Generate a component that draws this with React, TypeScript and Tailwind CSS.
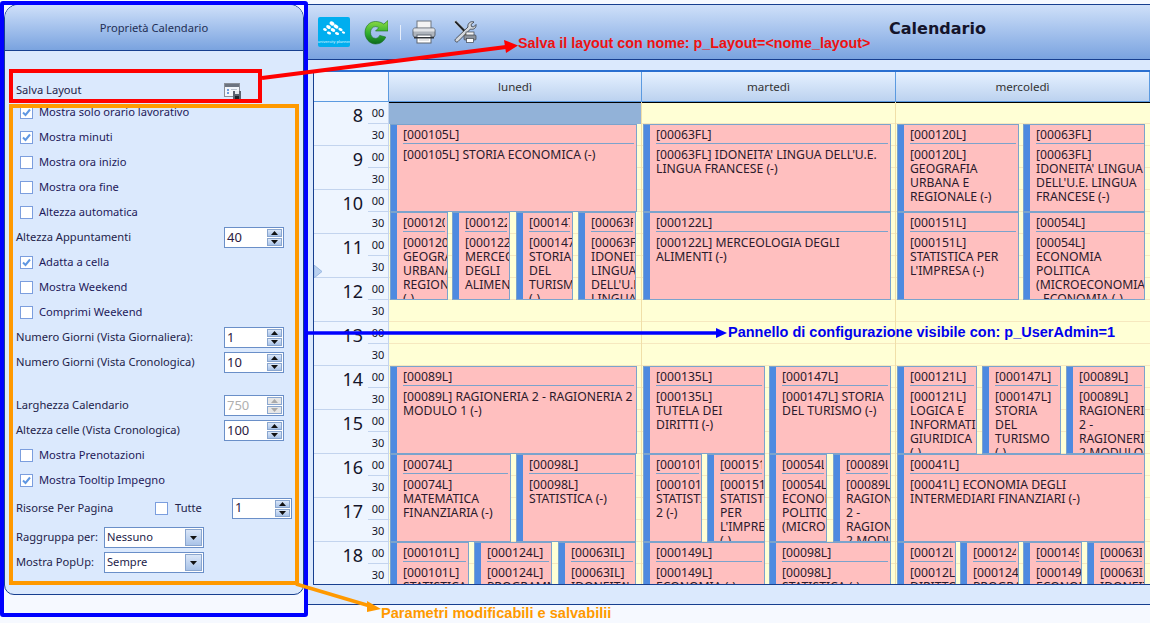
import React from "react";

type Ev = { code: string; text: string; cls: string };

const gridBg =
  "bg-[repeating-linear-gradient(to_bottom,#ffffd5_0px,#ffffd5_21px,#f6e8bf_21px,#f6e8bf_22px)]";

const E = ({ code, text, cls }: Ev) => (
  <div className={`flex h-[88px] shrink-0 overflow-hidden border border-[#7ba3cc] bg-[#ffbfbf] ${cls}`}>
    <div className="w-[6px] shrink-0 bg-[#4e8ae0]" />
    <div className="min-w-0 flex-1 pl-[6px] pr-[2px] text-[12.2px] leading-[14px] text-[#2b1a2b]">
      <div className="h-[19px] overflow-hidden whitespace-nowrap border-b border-[#7ba3cc] pt-[3px]">[{code}]</div>
      <div className="pt-[4px]">
        [{code}] {text.endsWith("(-)") ? text : `${text} (-)`}
      </div>
    </div>
  </div>
);

const Block = ({ items }: { items: Ev[] }) => (
  <div className="flex h-[88px] shrink-0">
    {items.map((e, i) => (
      <E key={i} {...e} />
    ))}
  </div>
);

const GEO = "GEOGRAFIA URBANA\u00A0E REGIONALE";
const MER = "MERCEOLOGIA DEGLI ALIMENTI\u00A0(-)";
const TUR = "STORIA DEL TURISMO";
const FRA = "IDONEITA' LINGUA DELL'U.E. LINGUA FRANCESE";
const RAG = "RAGIONERIA 2 - RAGIONERIA 2 MODULO 1";
const RAGN = "RAGIONERIA 2 - RAGIONERIA 2\u00A0MODULO 1";
const POL = "ECONOMIA POLITICA (MICROECONOMIA) -\u00A0ECONOMIA";
const IMP = "STATISTICA PER L'IMPRESA";

const Day1 = () => (
  <>
    <Block items={[{ code: "000105L", text: "STORIA ECONOMICA", cls: "ml-[1px] w-[247px]" }]} />
    <Block
      items={[
        { code: "000120L", text: GEO, cls: "ml-[1px] w-[58px]" },
        { code: "000122L", text: MER, cls: "ml-[4px] w-[58px]" },
        { code: "000147L", text: TUR, cls: "ml-[6px] w-[57px]" },
        { code: "00063FL", text: FRA, cls: "ml-[5px] w-[58px]" },
      ]}
    />
    <div className="h-[66px] shrink-0" />
    <Block items={[{ code: "00089L", text: RAG, cls: "ml-[1px] w-[247px]" }]} />
    <Block
      items={[
        { code: "00074L", text: "MATEMATICA FINANZIARIA", cls: "ml-[1px] w-[121px]" },
        { code: "00098L", text: "STATISTICA", cls: "ml-[5px] w-[120px]" },
      ]}
    />
    <Block
      items={[
        { code: "000101L", text: "STATISTICA 2", cls: "ml-[1px] w-[79px]" },
        { code: "000124L", text: "PROGRAMMAZIONE", cls: "ml-[5px] w-[78px]" },
        { code: "00063IL", text: "IDONEITA' LINGUA", cls: "ml-[6px] w-[78px]" },
      ]}
    />
  </>
);

const Day2 = () => (
  <>
    <Block items={[{ code: "00063FL", text: FRA, cls: "ml-[1px] w-[248px]" }]} />
    <Block items={[{ code: "000122L", text: MER, cls: "ml-[1px] w-[248px]" }]} />
    <div className="h-[66px] shrink-0" />
    <Block
      items={[
        { code: "000135L", text: "TUTELA\u00A0DEI DIRITTI", cls: "ml-[1px] w-[122px]" },
        { code: "000147L", text: TUR, cls: "ml-[4px] w-[122px]" },
      ]}
    />
    <Block
      items={[
        { code: "000101L", text: "STATISTICA 2", cls: "ml-[1px] w-[59px]" },
        { code: "000151L", text: IMP, cls: "ml-[5px] w-[58px]" },
        { code: "00054L", text: POL, cls: "ml-[4px] w-[58px]" },
        { code: "00089L", text: RAGN, cls: "ml-[6px] w-[58px]" },
      ]}
    />
    <Block
      items={[
        { code: "000149L", text: "ECONOMIA", cls: "ml-[1px] w-[122px]" },
        { code: "00098L", text: "STATISTICA", cls: "ml-[4px] w-[122px]" },
      ]}
    />
  </>
);

const Day3 = () => (
  <>
    <Block
      items={[
        { code: "000120L", text: GEO, cls: "ml-[1px] w-[122px]" },
        { code: "00063FL", text: FRA, cls: "ml-[4px] w-[122px] [&>div:last-child]:pr-0" },
      ]}
    />
    <Block
      items={[
        { code: "000151L", text: IMP, cls: "ml-[1px] w-[122px]" },
        { code: "00054L", text: POL, cls: "ml-[4px] w-[122px] [&>div:last-child]:pr-0" },
      ]}
    />
    <div className="h-[66px] shrink-0" />
    <Block
      items={[
        { code: "000121L", text: "LOGICA E INFORMATICA GIURIDICA", cls: "ml-[1px] w-[80px]" },
        { code: "000147L", text: TUR, cls: "ml-[5px] w-[79px]" },
        { code: "00089L", text: RAGN, cls: "ml-[5px] w-[79px]" },
      ]}
    />
    <Block items={[{ code: "00041L", text: "ECONOMIA DEGLI INTERMEDIARI FINANZIARI", cls: "ml-[1px] w-[248px]" }]} />
    <Block
      items={[
        { code: "00012L", text: "DIRITTO", cls: "ml-[1px] w-[59px]" },
        { code: "000124L", text: "PROGRAMMAZIONE", cls: "ml-[4px] w-[59px]" },
        { code: "000149L", text: "ECONOMIA", cls: "ml-[4px] w-[59px]" },
        { code: "00063IL", text: "IDONEITA' LINGUA", cls: "ml-[5px] w-[58px]" },
      ]}
    />
  </>
);

const Check = ({ on, label }: { on?: boolean; label: string }) => (
  <div className="flex h-[25px] shrink-0 items-center pl-[15px]">
    <span className="flex h-[13px] w-[13px] items-center justify-center border border-[#7b9ede] bg-white">
      {on && (
        <svg width="9" height="9" viewBox="0 0 9 9">
          <path d="M1 4.5 L3.5 7 L8 1.5" fill="none" stroke="#5f97e2" strokeWidth="2" />
        </svg>
      )}
    </span>
    <span className="ml-[6px] text-[11.15px] text-[#1e1a5a]">{label}</span>
  </div>
);

const Spin = ({ value, disabled }: { value: string; disabled?: boolean }) => (
  <div
    className={`flex h-[21px] w-[60px] shrink-0 items-center justify-between border border-[#6a8fc8] bg-white pl-[2px] pr-[1px] text-[13px] ${
      disabled ? "text-[#b0b0b0]" : "text-[#2b1a40]"
    }`}
  >
    <span>{value}</span>
    <span className="flex flex-col gap-[1px]">
      {[0, 1].map((i) => (
        <span
          key={i}
          className={`flex h-[8px] w-[15px] items-center justify-center border border-[#8aa6cf] ${
            disabled ? "bg-[#e6e6e6]" : "bg-gradient-to-b from-[#dbe7f8] to-[#a9c3e8]"
          }`}
        >
          <svg width="7" height="4" viewBox="0 0 7 4">
            <path d={i === 0 ? "M3.5 0 L7 4 L0 4 Z" : "M0 0 L7 0 L3.5 4 Z"} fill={disabled ? "#aaa" : "#111"} />
          </svg>
        </span>
      ))}
    </span>
  </div>
);

const NumRow = ({ label, value, disabled }: { label: string; value: string; disabled?: boolean }) => (
  <div className="flex h-[25px] shrink-0 items-center pl-[11px]">
    <span className="w-[208px] text-[11.15px] text-[#23234a]">{label}</span>
    <Spin value={value} disabled={disabled} />
  </div>
);

const Sel = ({ label, value, cls }: { label: string; value: string; cls: string }) => (
  <div className={`flex h-[21px] shrink-0 items-center pl-[11px] ${cls}`}>
    <span className="w-[88px] whitespace-nowrap text-[11.15px] text-[#23234a]">{label}</span>
    <div className="flex h-[21px] w-[100px] items-center justify-between border border-[#6a8fc8] bg-white pl-[2px] pr-[1px] text-[11.15px] text-[#23234a]">
      <span>{value}</span>
      <span className="flex h-[17px] w-[17px] items-center justify-center border border-[#8aa6cf] bg-gradient-to-b from-[#dbe7f8] to-[#a9c3e8]">
        <svg width="7" height="4" viewBox="0 0 7 4">
          <path d="M0 0 L7 0 L3.5 4 Z" fill="#111" />
        </svg>
      </span>
    </div>
  </div>
);

const SaveIcon = () => (
  <svg width="17" height="16" viewBox="0 0 17 16">
    <rect x="0.5" y="0.5" width="15" height="13" fill="#f3f6fb" stroke="#8a8f98" />
    <rect x="1" y="1" width="14" height="3" fill="#6d7480" />
    <rect x="3" y="6" width="2" height="2" fill="#6f9bd8" />
    <rect x="3" y="9" width="2" height="2" fill="#6f9bd8" />
    <rect x="7" y="6" width="6" height="1" fill="#b9c2cf" />
    <rect x="9" y="8" width="8" height="8" fill="#5b6270" />
    <rect x="11" y="8" width="4" height="3" fill="#e5e8ee" />
    <rect x="11" y="13" width="4" height="3" fill="#1f2329" />
  </svg>
);

const Logo = () => (
  <svg width="32" height="30" viewBox="0 0 32 30">
    <rect width="32" height="30" rx="2" fill="#00aeef" />
    <g fill="#fff">
      <ellipse cx="14" cy="6.5" rx="2.6" ry="2" transform="rotate(30 14 6.5)" />
      <ellipse cx="18" cy="9.5" rx="2.6" ry="1.8" transform="rotate(30 18 9.5)" />
      <ellipse cx="10.5" cy="10" rx="2.5" ry="1.7" transform="rotate(30 10.5 10)" />
      <ellipse cx="22.5" cy="12.5" rx="2.2" ry="1.5" transform="rotate(25 22.5 12.5)" />
      <ellipse cx="15" cy="13" rx="2.4" ry="1.7" transform="rotate(25 15 13)" />
      <ellipse cx="7" cy="12.5" rx="2" ry="1.4" transform="rotate(25 7 12.5)" />
      <ellipse cx="11" cy="16" rx="2.1" ry="1.4" transform="rotate(20 11 16)" />
      <ellipse cx="19" cy="16.5" rx="2.1" ry="1.4" transform="rotate(20 19 16.5)" />
      <ellipse cx="25.5" cy="15.5" rx="1.7" ry="1.1" transform="rotate(20 25.5 15.5)" />
    </g>
    <text x="16" y="26" textAnchor="middle" fontSize="4.2" fill="#d9f3ff" fontFamily="Liberation Sans, sans-serif">
      university planner
    </text>
  </svg>
);

const Refresh = () => (
  <svg width="24" height="26" viewBox="0 0 24 26">
    <defs>
      <linearGradient id="gr" x1="0" y1="0" x2="0" y2="1">
        <stop offset="0" stopColor="#8fdc45" />
        <stop offset="0.55" stopColor="#2fae2f" />
        <stop offset="1" stopColor="#0c6a1c" />
      </linearGradient>
    </defs>
    <path
      d="M11.5 2.5C5.5 2.5 1 7.4 1 13.5S5.5 25 11.5 25c4.8 0 8.8-2.8 10.2-7l-6-1.6c-.8 1.8-2.3 3-4.2 3-2.9 0-5-2.6-5-5.9s2.1-5.9 5-5.9c1.3 0 2.3.4 3.2 1.2L11.5 12H24V1.5l-4.2 3.6C17.6 3.4 14.7 2.5 11.5 2.5Z"
      fill="url(#gr)"
      stroke="#176b22"
      strokeWidth="0.6"
    />
  </svg>
);

const Printer = () => (
  <svg width="24" height="24" viewBox="0 0 24 24">
    <rect x="5" y="1" width="14" height="8" fill="#f4f4f4" stroke="#6f7680" />
    <rect x="1" y="8" width="22" height="9" rx="2" fill="#aeb4bc" stroke="#5f6670" />
    <rect x="1.5" y="8.5" width="21" height="3" fill="#dfe2e6" />
    <rect x="5" y="15" width="14" height="8" fill="#fff" stroke="#5f6670" />
    <rect x="2" y="17" width="20" height="1.5" fill="#2f3338" />
    <rect x="7" y="19.5" width="10" height="1" fill="#c5c8cc" />
  </svg>
);

const Tools = () => (
  <svg width="24" height="24" viewBox="0 0 24 24">
    <path d="M1 2 L3 0.5 L13.5 11 L11.5 13 Z" fill="#1f2328" stroke="#eef1f4" strokeWidth="0.6" />
    <path d="M11 11 L14 14 L12 15.5 L9.5 12.5 Z" fill="#e0b020" />
    <path d="M21 2 L18 4.5 L18.5 6.5 L20.5 7 L23 4.5 C23.5 8 20.5 10 17.5 9 L5 21.5 C3.5 23 1 21 2.5 19 L15 7 C14 4 17.5 0.5 21 2Z" fill="#d4d8dd" stroke="#30343a" strokeWidth="0.8" />
    <rect x="13" y="12" width="8" height="4" fill="#f4f4f4" stroke="#3f454d" strokeWidth="0.7" />
    <rect x="11" y="15" width="12" height="5" rx="1" fill="#8c939c" stroke="#3f454d" strokeWidth="0.7" />
    <rect x="13.5" y="18.5" width="7" height="4" fill="#fff" stroke="#3f454d" strokeWidth="0.7" />
  </svg>
);

const hours = [8, 9, 10, 11, 12, 13, 14, 15, 16, 17, 18];

export default function App() {
  return (
    <div className="relative flex h-[623px] w-[1150px] overflow-hidden bg-[#f6f9ff] font-['Noto_Sans',sans-serif]">
      {/* left panel */}
      <div className="ml-[4px] mt-[4px] flex h-[591px] w-[300px] shrink-0 flex-col rounded-b-[10px] rounded-t-[14px] border border-[#173f8f] bg-[#dbe9fd]">
        <div className="flex h-[46px] shrink-0 items-center justify-center rounded-t-[13px] border-b border-[#173f8f] bg-gradient-to-b from-[#cfe0f9] to-[#7aa3df] pt-[2px] text-[11.15px] text-[#1f2f55]">
          Proprietà Calendario
        </div>
        <div className="flex flex-col pt-[28px]">
          <div className="flex h-[21px] shrink-0 items-center pl-[11px] pt-[2px]">
            <span className="w-[208px] text-[11.15px] text-[#23234a]">Salva Layout</span>
            <SaveIcon />
          </div>
          <Check on label="Mostra solo orario lavorativo" />
          <Check on label="Mostra minuti" />
          <Check label="Mostra ora inizio" />
          <Check label="Mostra ora fine" />
          <Check label="Altezza automatica" />
          <NumRow label="Altezza Appuntamenti" value="40" />
          <Check on label="Adatta a cella" />
          <Check label="Mostra Weekend" />
          <Check label="Comprimi Weekend" />
          <NumRow label="Numero Giorni (Vista Giornaliera):" value="1" />
          <NumRow label="Numero Giorni (Vista Cronologica)" value="10" />
          <div className="h-[18px] shrink-0" />
          <NumRow label="Larghezza Calendario" value="750" disabled />
          <NumRow label="Altezza celle (Vista Cronologica)" value="100" />
          <Check label="Mostra Prenotazioni" />
          <Check on label="Mostra Tooltip Impegno" />
          <div className="flex h-[30px] shrink-0 items-center pl-[11px]">
            <span className="w-[139px] text-[11.15px] text-[#23234a]">Risorse Per Pagina</span>
            <span className="h-[13px] w-[13px] border border-[#7b9ede] bg-white" />
            <span className="ml-[7px] w-[57px] text-[11.15px] text-[#23234a]">Tutte</span>
            <Spin value="1" />
          </div>
          <Sel label="Raggruppa per:" value="Nessuno" cls="mt-[4px]" />
          <Sel label="Mostra PopUp:" value="Sempre" cls="mt-[4px]" />
        </div>
      </div>

      {/* right side */}
      <div className="ml-[4px] mt-[4px] flex h-[601px] min-w-0 flex-1 flex-col border-b border-[#173f8f]">
        <div className="flex h-[56px] shrink-0 items-center border-y border-[#173f8f] bg-gradient-to-b from-[#cfe0f9] to-[#7aa3df] pl-[10px]">
          <Logo />
          <span className="ml-[14px]">
            <Refresh />
          </span>
          <span className="ml-[12px] h-[15px] w-px bg-[#e6eefb]" />
          <span className="ml-[11px]">
            <Printer />
          </span>
          <span className="ml-[17px]">
            <Tools />
          </span>
          <span className="mb-[6px] ml-[412px] font-['DejaVu_Sans',sans-serif] text-[16px] font-bold text-[#14142a]">
            Calendario
          </span>
        </div>
        <div className="flex min-h-0 flex-1 flex-col bg-[#dbe9fd] pt-[10px]">
          <div className="ml-[5px] flex h-[515px] shrink-0 flex-col overflow-hidden border-b border-l border-t-2 border-[#173f8f] border-t-[#2a6fd0] bg-white">
            {/* header */}
            <div className="flex h-[30px] shrink-0 text-[11.6px] text-[#333]">
              <div className="w-[75px] shrink-0 border-b border-r border-[#5b9ae0] bg-[#eef5ff]" />
              {["lunedì", "martedì", "mercoledì"].map((d, i) => (
                <div
                  key={d}
                  className={`flex items-center justify-center border-b border-r border-[#5b9ae0] bg-gradient-to-b from-[#e6f1ff] to-[#bcd2ef] pt-[1px] ${
                    i === 0 ? "w-[253px]" : i === 1 ? "w-[254px]" : "flex-1"
                  }`}
                >
                  {d}
                </div>
              ))}
            </div>
            {/* body */}
            <div className="flex min-h-0 flex-1 overflow-hidden">
              <div className="relative w-[75px] shrink-0 border-r border-[#c3d4ee] bg-[#eef5ff]">
                {hours.map((h) => (
                  <div key={h} className="flex h-[44px] border-b border-[#c3d4ee]">
                    <div className="w-[50px] pt-[1px] pr-[1px] text-right text-[18px] leading-[24px] text-[#14142a]">{h}</div>
                    <div className="ml-[4px] flex w-[20px] flex-col text-[11px] text-[#14142a]">
                      <div className="flex h-[22px] items-center justify-center border-b border-[#c3d4ee] pt-[2px]">00</div>
                      <div className="flex h-[21px] items-center justify-center pt-[2px]">30</div>
                    </div>
                  </div>
                ))}
                <svg className="absolute left-[0px] top-[163px]" width="8" height="13" viewBox="0 0 8 13">
                  <path d="M0 0 L8 6.5 L0 13 Z" fill="#b9d0ef" stroke="#9ab8e2" />
                </svg>
              </div>
              <div className={`flex w-[253px] shrink-0 flex-col border-r border-[#f0dfa8] ${gridBg}`}>
                <div className="h-[22px] shrink-0 border-t border-black bg-[#92b2d8]" />
                <Day1 />
              </div>
              <div className={`flex w-[254px] shrink-0 flex-col border-r border-[#f0dfa8] ${gridBg}`}>
                <div className="h-[22px] shrink-0 border-t border-black" />
                <Day2 />
              </div>
              <div className={`flex min-w-0 flex-1 flex-col ${gridBg}`}>
                <div className="h-[22px] shrink-0 border-t border-black" />
                <Day3 />
              </div>
            </div>
          </div>
        </div>
      </div>

      {/* annotations */}
      <div className="pointer-events-none absolute left-0 top-[1px] h-[616px] w-[308px] rounded-[3px] border-4 border-[#0000ff]" />
      <div className="pointer-events-none absolute left-[9px] top-[69px] h-[34px] w-[253px] border-4 border-[#ff0000]" />
      <div className="pointer-events-none absolute left-[9px] top-[104px] h-[481px] w-[290px] border-4 border-[#ff9900]" />
      <svg className="pointer-events-none absolute left-0 top-0" width="1150" height="623">
        <line x1="262" y1="78" x2="506" y2="47" stroke="#ff0000" strokeWidth="4" />
        <path d="M504 40 L518 45.5 L506 53 Z" fill="#ff0000" />
        <line x1="305" y1="333" x2="720" y2="333" stroke="#0000ff" strokeWidth="3.5" />
        <path d="M716 328 L727 333 L716 338 Z" fill="#0000ff" />
        <line x1="296" y1="584" x2="370" y2="606" stroke="#ff9900" strokeWidth="3.5" />
        <path d="M367 601 L381 609 L367 612 Z" fill="#ff9900" />
      </svg>
      <div className="absolute left-[518px] top-[35px] whitespace-nowrap font-['Liberation_Sans',sans-serif] text-[14.3px] font-bold leading-[16px] text-[#ee1111]">
        {"Salva il layout con nome: p_Layout=<nome_layout>"}
      </div>
      <div className="absolute left-[728px] top-[324px] whitespace-nowrap font-['Liberation_Sans',sans-serif] text-[14.5px] font-bold leading-[16px] text-[#0000ee]">
        Pannello di configurazione visibile con: p_UserAdmin=1
      </div>
      <div className="absolute left-[381px] top-[605px] whitespace-nowrap font-['Liberation_Sans',sans-serif] text-[14.6px] font-bold leading-[16px] text-[#ff9900]">
        Parametri modificabili e salvabilii
      </div>
    </div>
  );
}
